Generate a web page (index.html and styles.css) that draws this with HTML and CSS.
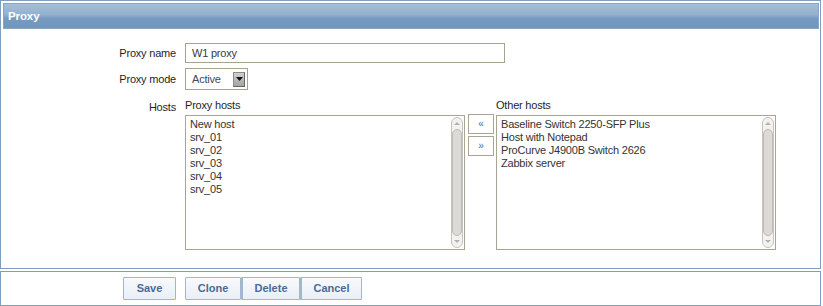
FILE: index.html
```html
<!DOCTYPE html>
<html>
<head>
<meta charset="utf-8">
<link rel="stylesheet" href="styles.css">
</head>
<body>
<div class="panel">
  <div class="header">Proxy</div>
  <div class="form">
    <label class="lbl">Proxy name</label>
    <div class="field"><input class="text" type="text" value="W1 proxy"></div>

    <label class="lbl">Proxy mode</label>
    <div class="field">
      <div class="select">
        <span class="select-val">Active</span>
        <span class="select-btn"><svg width="7" height="4" viewBox="0 0 7 4"><path d="M0 0h7L3.5 4z" fill="#111"/></svg></span>
      </div>
    </div>

    <label class="lbl lbl-hosts">Hosts</label>
    <div class="hosts">
      <div class="hcol">
        <div class="hlabel">Proxy hosts</div>
        <div class="list">
          <div class="items">
            <div>New host</div>
            <div>srv_01</div>
            <div>srv_02</div>
            <div>srv_03</div>
            <div>srv_04</div>
            <div>srv_05</div>
          </div>
          <div class="sbar">
            <div class="sarrow up"><svg width="6" height="3" viewBox="0 0 6 3"><path d="M0 3h6L3 0z" fill="#b5b2ab"/></svg></div>
            <div class="thumb"></div>
            <div class="sarrow down"><svg width="6" height="3" viewBox="0 0 6 3"><path d="M0 0h6L3 3z" fill="#b5b2ab"/></svg></div>
          </div>
        </div>
      </div>
      <div class="moves">
        <button class="mv">&laquo;</button>
        <button class="mv">&raquo;</button>
      </div>
      <div class="hcol">
        <div class="hlabel">Other hosts</div>
        <div class="list">
          <div class="items">
            <div>Baseline Switch 2250-SFP Plus</div>
            <div>Host with Notepad</div>
            <div>ProCurve J4900B Switch 2626</div>
            <div>Zabbix server</div>
          </div>
          <div class="sbar">
            <div class="sarrow up"><svg width="6" height="3" viewBox="0 0 6 3"><path d="M0 3h6L3 0z" fill="#b5b2ab"/></svg></div>
            <div class="thumb"></div>
            <div class="sarrow down"><svg width="6" height="3" viewBox="0 0 6 3"><path d="M0 0h6L3 3z" fill="#b5b2ab"/></svg></div>
          </div>
        </div>
      </div>
    </div>
  </div>
</div>
<div class="footer">
  <div class="fleft"><button class="btn save">Save</button></div>
  <div class="group">
    <button class="btn g">Clone</button><button class="btn g">Delete</button><button class="btn g">Cancel</button>
  </div>
</div>
</body>
</html>
```

FILE: styles.css
```css
* { box-sizing: border-box; }
html, body { margin: 0; padding: 0; background: #fff; }
body {
  width: 823px;
  font-family: "Liberation Sans", Arial, sans-serif;
  font-size: 11px;
  letter-spacing: -0.2px;
  color: #1f1f1f;
}
.panel {
  width: 821px;
  border: 1px solid #7f9dbd;
  padding: 2px 1px 18px 2px;
  height: 269px;
}
.header {
  height: 26px;
  border: 1px solid #8aa6c5;
  background: linear-gradient(#a6bed6 0%, #93b0cd 45%, #7599bf 60%, #7297bd 100%);
  color: #fff;
  font-weight: bold;
  font-size: 11.5px;
  letter-spacing: -0.1px;
  padding-left: 4px;
  line-height: 25px;
}
.form {
  display: grid;
  grid-template-columns: 173px 1fr;
  column-gap: 9px;
  row-gap: 5px;
  margin-top: 14px;
  align-items: center;
}
.lbl { text-align: right; color: #1f1f1f; }
.lbl-hosts { align-self: start; padding-top: 6px; }
.text {
  display: block;
  width: 320px;
  height: 20px;
  border: 1px solid #a5a38f;
  padding: 0 6px;
  font-family: "Liberation Sans", Arial, sans-serif;
  font-size: 11px;
  letter-spacing: -0.2px;
  color: #3a3a3a;
  outline: none;
  margin: 0;
}
.select {
  width: 63px;
  height: 22px;
  border: 1px solid #a5a38f;
  display: flex;
  align-items: center;
  justify-content: space-between;
  padding: 0 2px 0 6px;
}
.select-val { color: #3c4a5c; }
.select-btn {
  width: 12px;
  height: 15px;
  background: linear-gradient(#d0d0d0, #a4a4a4);
  border: 1px solid #8c8c8c;
  border-right-color: #666;
  border-bottom-color: #666;
  display: flex;
  align-items: center;
  justify-content: center;
}
.hosts {
  display: flex;
  align-items: flex-start;
  margin-top: 4px;
}
.hlabel { height: 16px; line-height: 13px; color: #1f1f1f; }
.list {
  width: 280px;
  height: 135px;
  border: 1px solid #a8a595;
  display: flex;
  justify-content: space-between;
  padding: 1px 1px 1px 4px;
}
.items {
  color: #333;
  line-height: 13px;
  padding-top: 1px;
}
.sbar {
  width: 12px;
  height: 100%;
  border: 1px solid #c6c3bc;
  border-radius: 6px;
  background: #f3f2f0;
  display: flex;
  flex-direction: column;
  align-items: center;
}
.sarrow {
  height: 11px;
  display: flex;
  align-items: center;
  justify-content: center;
}
.thumb {
  flex: 1;
  width: 10px;
  border: 1px solid #bfbcb5;
  border-radius: 5px;
  background: #dcdad6;
}
.moves {
  display: flex;
  flex-direction: column;
  gap: 2px;
  margin: 15px 2px 0 3px;
}
.mv {
  width: 26px;
  height: 20px;
  border: 1px solid #a8a595;
  background: #fff;
  color: #4b6c99;
  font-size: 10px;
  padding: 0;
  margin: 0;
  font-family: "Liberation Sans", Arial, sans-serif;
  line-height: 16px;
}
.footer {
  width: 821px;
  margin-top: 2px;
  border: 1px solid #7f9dbd;
  height: 35px;
  display: grid;
  grid-template-columns: 175px 1fr;
  column-gap: 9px;
  align-items: center;
}
.fleft { display: flex; justify-content: flex-end; }
.btn {
  height: 23px;
  border: 1px solid #a2b6cf;
  background: linear-gradient(#f8fafc, #e9eff6);
  color: #4b6a96;
  font-weight: bold;
  font-family: "Liberation Sans", Arial, sans-serif;
  font-size: 11px;
  padding: 0 0 1px;
  margin: 0;
  border-radius: 1px;
}
.save { width: 53px; border-color: #f5a73a; }
.group { display: flex; }
.g:nth-child(1) { width: 56px; }
.g:nth-child(2) { width: 59px; }
.g:nth-child(3) { width: 62px; }
.g + .g { border-left: 2px solid #a2b6cf; }
```
